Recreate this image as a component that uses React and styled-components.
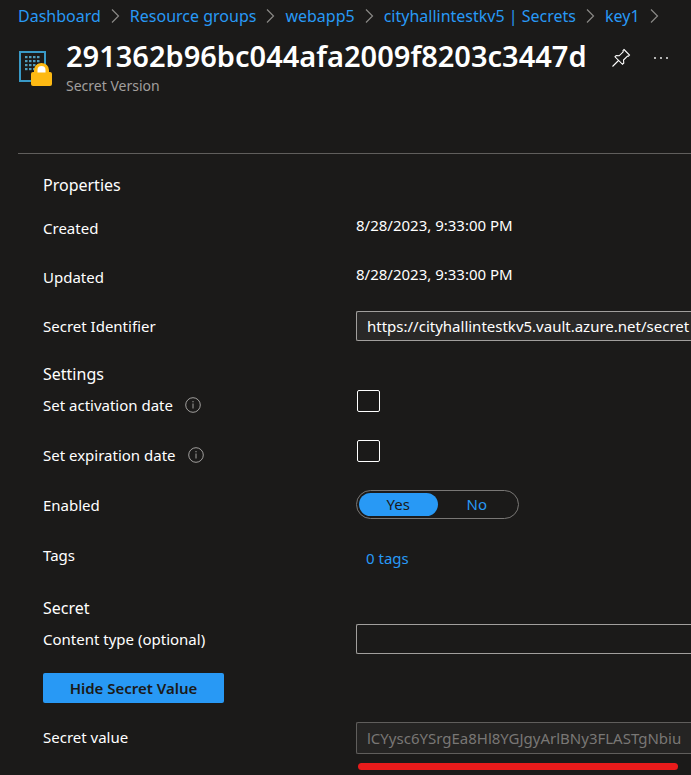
import React, { useState } from "react";
import styled, { createGlobalStyle } from "styled-components";

const GlobalStyle = createGlobalStyle`
  *, *::before, *::after { box-sizing: border-box; }
  body {
    margin: 0;
    background: #1b1a19;
    color: #fff;
    font-family: "Noto Sans", "Open Sans", sans-serif;
    font-size: 15px;
    overflow-x: hidden;
  }
  button, input { font: inherit; color: inherit; }
`;

const Page = styled.main`
  display: flex;
  flex-direction: column;
  min-height: 100vh;
  padding-left: 18px;
`;

const Breadcrumb = styled.nav`
  display: flex;
  align-items: center;
  height: 32px;
  gap: 10px;
  font-size: 16px;
  white-space: nowrap;
`;

const Link = styled.a`
  color: #2899f5;
  text-decoration: none;
`;

const Chevron = styled.svg`
  flex: none;
  width: 9px;
  height: 16px;
  fill: none;
  stroke: #8a8886;
  stroke-width: 1.2;
`;

const Header = styled.header`
  display: flex;
  align-items: flex-start;
  height: 122px;
  border-bottom: 1px solid #605e5c;
`;

const SecretIcon = styled.svg`
  flex: none;
  width: 36px;
  height: 38px;
  margin: 18px 12px 0 0;
`;

const Heading = styled.div`
  display: flex;
  flex-direction: column;
`;

const Title = styled.h1`
  margin: 4px 0 0;
  font-size: 29px;
  line-height: 40px;
  font-weight: 600;
`;

const Subtitle = styled.p`
  margin: 0;
  color: #a19f9d;
  font-size: 14px;
  line-height: 20px;
`;

const IconButton = styled.button`
  flex: none;
  display: flex;
  align-items: center;
  justify-content: center;
  width: 40px;
  height: 40px;
  margin-top: 6px;
  padding: 0;
  border: 0;
  background: none;
`;

const Actions = styled.div`
  display: flex;
  margin-left: 14px;
`;

const Form = styled.form`
  display: flex;
  flex-direction: column;
  gap: 18px;
  padding: 16px 0 4px 25px;
`;

const Section = styled.section`
  display: flex;
  flex-direction: column;
`;

const SectionTitle = styled.h2`
  margin: 0 0 ${(p) => (p.$spaced ? "12px" : "0")};
  font-size: 16px;
  line-height: 31px;
  font-weight: 400;
`;

const Rows = styled.div`
  display: flex;
  flex-direction: column;
  gap: ${(p) => (p.$loose ? "20px" : "19px")};
`;

const Row = styled.div`
  display: grid;
  grid-template-columns: 313px minmax(0, 1fr);
  align-items: start;
  min-height: 30px;
`;

const Label = styled.label`
  display: flex;
  align-items: center;
  gap: 12px;
  line-height: 30px;
`;

const Value = styled.output`
  line-height: 24px;
`;

const Field = styled.input`
  width: 100%;
  height: ${(p) => (p.$tall ? "32px" : "30px")};
  padding: 0 0 0 10px;
  border: 1px solid #a19f9d;
  border-right: 0;
  border-radius: 2px 0 0 2px;
  outline: 0;
  background: ${(p) => (p.readOnly ? "#292827" : "transparent")};
  &:disabled {
    border-color: #605e5c;
    background: #252423;
    color: #797775;
  }
`;

const Checkbox = styled.input`
  appearance: none;
  width: 23px;
  height: 22px;
  margin: 0 0 0 1px;
  border: 1px solid #fff;
  border-radius: 2px;
  &:checked { background: #2899f5; }
`;

const Toggle = styled.div`
  display: flex;
  justify-self: start;
  width: 163px;
  height: 29px;
  padding: 2px;
  border: 1px solid #797775;
  border-radius: 15px;
`;

const Option = styled.button`
  flex: 1;
  padding: 0;
  border: 0;
  border-radius: 12px;
  line-height: 23px;
  background: ${(p) => (p.$on ? "#2899f5" : "transparent")};
  color: ${(p) => (p.$on ? "#1b1a19" : "#2899f5")};
`;

const TagsLink = styled(Link)`
  padding: 3px 10px 2px;
  line-height: 30px;
`;

const PrimaryButton = styled.button`
  align-self: flex-start;
  width: 181px;
  height: 30px;
  padding: 0;
  border: 0;
  border-radius: 2px;
  background: #2899f5;
  color: #1b1a19;
  font-weight: 600;
`;

const SecretField = styled.div`
  display: flex;
  flex-direction: column;
  gap: 9px;
`;

const Underline = styled.div`
  height: 7px;
  margin: 0 13px 0 2px;
  border-radius: 4px;
  background: #e81b1b;
`;

const InfoSvg = styled.svg`
  width: 16px;
  height: 16px;
  fill: none;
  stroke: #a19f9d;
`;

function Info() {
  return (
    <InfoSvg viewBox="0 0 16 16" aria-hidden="true">
      <circle cx="8" cy="8" r="7.3" />
      <path d="M8 6.5v5M8 4v1.3" />
    </InfoSvg>
  );
}

const dots = [0, 1, 2, 3].flatMap((r) => [0, 1, 2, 3].map((c) => [c, r]));

function VaultIcon() {
  return (
    <SecretIcon viewBox="0 0 36 38" aria-hidden="true">
      <rect x="2" y="2" width="25" height="29" fill="#1b1a19" stroke="#3999c6" strokeWidth="2" />
      {dots.map(([c, r]) => (
        <rect key={`${c}-${r}`} x={7 + c * 4} y={6 + r * 4} width="2.5" height="2.2" fill="#59b4d9" opacity="0.85" />
      ))}
      <path d="M16 23v-3a7.500 7 0 0 1 15 0v3z" fill="#fdb913" />
      <rect x="13" y="22" width="21" height="14" rx="2" fill="#fdb913" />
      <path d="M19.500 22.500v-2.500a4 4 0 0 1 8 0v2.500z" fill="#fff" />
    </SecretIcon>
  );
}

const crumbs = ["Dashboard", "Resource groups", "webapp5", "cityhallintestkv5 | Secrets", "key1"];

export default function App() {
  const [enabled, setEnabled] = useState(true);
  return (
    <Page>
      <GlobalStyle />
      <Breadcrumb aria-label="Breadcrumb">
        {crumbs.map((name) => (
          <React.Fragment key={name}>
            <Link href="#">{name}</Link>
            <Chevron viewBox="0 0 9 16" aria-hidden="true">
              <path d="M1 1.5L7.500 8 1 14.500" />
            </Chevron>
          </React.Fragment>
        ))}
      </Breadcrumb>
      <Header>
        <VaultIcon />
        <Heading>
          <Title>291362b96bc044afa2009f8203c3447d</Title>
          <Subtitle>Secret Version</Subtitle>
        </Heading>
        <Actions>
          <IconButton type="button" aria-label="Pin">
            <svg width="20" height="20" viewBox="0 0 20 20" fill="none" stroke="#fff" strokeWidth="1.100">
              <path d="M13 1.500L18.500 7 17.500 8.200l-1-.200-4 4 .300 3-1.300 1.300-7.500-7.500L5.200 7.500l3 .300 4-4-.200-1.200zM7.500 12.500L1.500 18.500" />
            </svg>
          </IconButton>
          <IconButton type="button" aria-label="More">
            <svg width="16" height="4" viewBox="0 0 16 4" fill="#fff">
              <circle cx="2" cy="2" r="0.900" />
              <circle cx="8" cy="2" r="0.900" />
              <circle cx="14" cy="2" r="0.900" />
            </svg>
          </IconButton>
        </Actions>
      </Header>
      <Form>
        <Section>
          <SectionTitle $spaced>Properties</SectionTitle>
          <Rows>
            <Row>
              <Label htmlFor="created">Created</Label>
              <Value id="created">8/28/2023, 9:33:00 PM</Value>
            </Row>
            <Row>
              <Label htmlFor="updated">Updated</Label>
              <Value id="updated">8/28/2023, 9:33:00 PM</Value>
            </Row>
            <Row>
              <Label htmlFor="identifier">Secret Identifier</Label>
              <Field id="identifier" readOnly value="https://cityhallintestkv5.vault.azure.net/secret" />
            </Row>
          </Rows>
        </Section>
        <Section>
          <SectionTitle>Settings</SectionTitle>
          <Rows $loose>
            <Row>
              <Label htmlFor="activation">Set activation date <Info /></Label>
              <Checkbox type="checkbox" id="activation" />
            </Row>
            <Row>
              <Label htmlFor="expiration">Set expiration date <Info /></Label>
              <Checkbox type="checkbox" id="expiration" />
            </Row>
            <Row>
              <Label as="span" id="enabled">Enabled</Label>
              <Toggle role="group" aria-labelledby="enabled">
                <Option type="button" $on={enabled} aria-pressed={enabled} onClick={() => setEnabled(true)}>Yes</Option>
                <Option type="button" $on={!enabled} aria-pressed={!enabled} onClick={() => setEnabled(false)}>No</Option>
              </Toggle>
            </Row>
            <Row>
              <Label as="span">Tags</Label>
              <TagsLink href="#">0 tags</TagsLink>
            </Row>
          </Rows>
        </Section>
        <Section>
          <SectionTitle>Secret</SectionTitle>
          <Rows>
            <Row>
              <Label htmlFor="content-type">Content type (optional)</Label>
              <Field id="content-type" type="text" />
            </Row>
            <PrimaryButton type="button">Hide Secret Value</PrimaryButton>
            <Row>
              <Label htmlFor="secret-value">Secret value</Label>
              <SecretField>
                <Field id="secret-value" $tall disabled value="lCYysc6YSrgEa8Hl8YGJgyArlBNy3FLASTgNbiu" />
                <Underline />
              </SecretField>
            </Row>
          </Rows>
        </Section>
      </Form>
    </Page>
  );
}
